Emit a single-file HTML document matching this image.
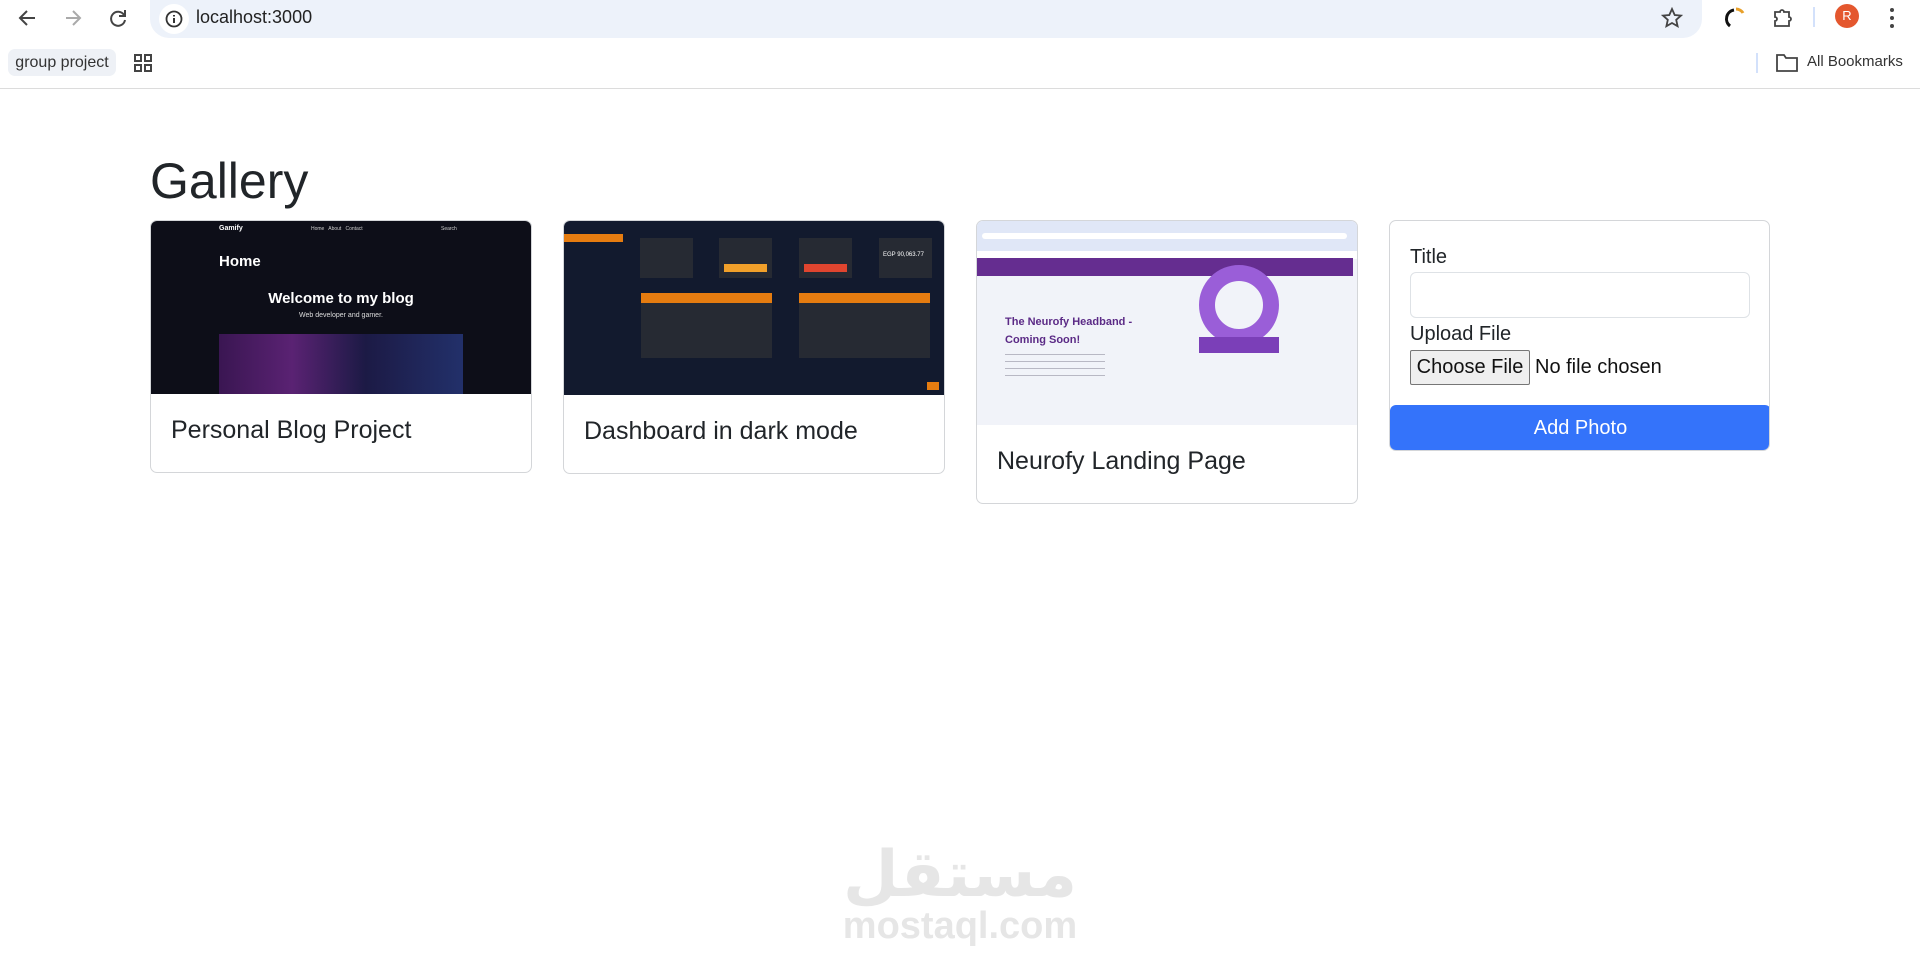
<!DOCTYPE html>
<html><head><meta charset="utf-8"><style>
*{box-sizing:border-box;margin:0;padding:0}
body{width:1920px;height:968px;background:#fff;font-family:"Liberation Sans",sans-serif;position:relative;overflow:hidden;color:#212529}
.a{position:absolute}
.card{position:absolute;border:1px solid #d4d6d9;border-radius:7px;background:#fff;overflow:hidden}
.ct{position:absolute;left:20px;font-size:25px;color:#212529}
</style></head><body>
<!-- chrome -->
<div class="a" style="left:150px;top:0;width:1552px;height:38px;background:#edf2fa;border-radius:0 0 19px 19px"></div>
<div class="a" style="left:159px;top:4px;width:30px;height:30px;background:#fff;border-radius:50%"></div>
<svg class="a" style="left:16px;top:7px" width="120" height="22" viewBox="0 0 120 22">
<path d="M19 11H5M11 4l-7 7 7 7" stroke="#444" stroke-width="2" fill="none"/>
<path d="M50 11h14M57 4l7 7-7 7" stroke="#aaa" stroke-width="2" fill="none"/>
<path d="M108 8a7 7 0 1 0 1 5M109 3v6h-6" stroke="#444" stroke-width="2" fill="none"/>
</svg>
<svg class="a" style="left:165px;top:10px" width="18" height="18"><circle cx="9" cy="9" r="7.5" stroke="#333" stroke-width="1.8" fill="none"/><path d="M9 8v5M9 5v1.5" stroke="#333" stroke-width="2"/></svg>
<div class="a" style="left:196px;top:7px;font-size:18px;color:#222">localhost:3000</div>
<svg class="a" style="left:1661px;top:7px" width="22" height="22"><path d="M11 2l2.7 6 6.3.6-4.8 4.2 1.4 6.4L11 16l-5.6 3.2 1.4-6.4L2 8.6 8.3 8z" stroke="#444" stroke-width="1.8" fill="none"/></svg>
<svg class="a" style="left:1722px;top:5px" width="26" height="26"><path d="M12 5a9 9 0 0 0-4 16" stroke="#111" stroke-width="3" fill="none"/><path d="M14 4c3 0 6 2 7 4" stroke="#e8a02a" stroke-width="3" fill="none"/></svg>
<svg class="a" style="left:1770px;top:6px" width="24" height="24"><path d="M5 6h5a2 2 0 0 1 4 0h5v5a2 2 0 0 1 0 4v5H5v-5a2 2 0 0 0 0-4z" stroke="#444" stroke-width="1.8" fill="none"/></svg>
<div class="a" style="left:1813px;top:7px;width:2px;height:20px;background:#d3e1fb"></div>
<div class="a" style="left:1835px;top:4px;width:24px;height:24px;border-radius:50%;background:#e4572e;color:#fff;font-size:13px;text-align:center;line-height:24px">R</div>
<svg class="a" style="left:1888px;top:6px" width="8" height="24"><circle cx="4" cy="4" r="2" fill="#444"/><circle cx="4" cy="12" r="2" fill="#444"/><circle cx="4" cy="20" r="2" fill="#444"/></svg>
<div class="a" style="left:8px;top:49px;width:108px;height:27px;background:#eef1f6;border-radius:7px;font-size:16px;color:#333;text-align:center;line-height:27px">group project</div>
<svg class="a" style="left:134px;top:54px" width="18" height="18"><g stroke="#444" stroke-width="2" fill="none"><rect x="1" y="1" width="6" height="6"/><rect x="11" y="1" width="6" height="6"/><rect x="1" y="11" width="6" height="6"/><rect x="11" y="11" width="6" height="6"/></g></svg>
<div class="a" style="left:1756px;top:53px;width:2px;height:20px;background:#d3e1fb"></div>
<svg class="a" style="left:1776px;top:53px" width="22" height="19"><path d="M1 2h7l2 3h11v13H1z" stroke="#444" stroke-width="1.8" fill="none"/></svg>
<div class="a" style="left:1807px;top:53px;font-size:15px;color:#333">All Bookmarks</div>
<div class="a" style="left:0;top:88px;width:1920px;height:1px;background:#dcdcdc"></div>

<div class="a" style="left:150px;top:152px;font-size:50px;color:#212529">Gallery</div>

<!-- card 1 -->
<div class="card" style="left:150px;top:220px;width:382px;height:253px">
 <div class="a" style="left:0;top:0;width:380px;height:173px;background:#0d0e18">
  <div class="a" style="left:68px;top:4px;font-size:7px;color:#fff;font-weight:bold">Gamify</div>
  <div class="a" style="left:160px;top:5px;font-size:5px;color:#ccc">Home &nbsp; About &nbsp; Contact</div>
  <div class="a" style="left:290px;top:5px;font-size:5px;color:#ccc">Search</div>
  <div class="a" style="left:68px;top:32px;font-size:15px;color:#fff;font-weight:bold">Home</div>
  <div class="a" style="left:0;top:69px;width:380px;text-align:center;font-size:15px;color:#fff;font-weight:bold">Welcome to my blog</div>
  <div class="a" style="left:0;top:91px;width:380px;text-align:center;font-size:7px;color:#ddd">Web developer and gamer.</div>
  <div class="a" style="left:68px;top:113px;width:244px;height:60px;background:linear-gradient(90deg,#3a1652,#5a2273 30%,#1c1a45 60%,#22306a)"></div>
 </div>
 <div class="ct" style="top:195px">Personal Blog Project</div>
</div>
<!-- card 2 -->
<div class="card" style="left:563px;top:220px;width:382px;height:254px">
 <div class="a" style="left:0;top:0;width:380px;height:174px;background:#121a2e">
  <div class="a" style="left:0;top:13px;width:59px;height:8px;background:#e57c10"></div>
  <div class="a" style="left:76px;top:17px;width:53px;height:40px;background:#262a33"></div>
  <div class="a" style="left:155px;top:17px;width:53px;height:40px;background:#262a33"><div class="a" style="left:5px;top:26px;width:43px;height:8px;background:#f1a02a"></div></div>
  <div class="a" style="left:235px;top:17px;width:53px;height:40px;background:#262a33"><div class="a" style="left:5px;top:26px;width:43px;height:8px;background:#e0452f"></div></div>
  <div class="a" style="left:315px;top:17px;width:53px;height:40px;background:#262a33"><div class="a" style="left:4px;top:14px;font-size:6px;color:#fff">EGP 90,063.77</div></div>
  <div class="a" style="left:77px;top:72px;width:131px;height:65px;background:#262a33"><div style="height:10px;background:#e57c10"></div></div>
  <div class="a" style="left:235px;top:72px;width:131px;height:65px;background:#262a33"><div style="height:10px;background:#e57c10"></div></div>
  <div class="a" style="left:363px;top:161px;width:12px;height:8px;background:#e57c10"></div>
 </div>
 <div class="ct" style="top:196px">Dashboard in dark mode</div>
</div>
<!-- card 3 -->
<div class="card" style="left:976px;top:220px;width:382px;height:284px">
 <div class="a" style="left:0;top:0;width:380px;height:204px;background:#f1f3f9">
  <div class="a" style="left:0;top:0;width:380px;height:30px;background:#e0e7f7"></div>
  <div class="a" style="left:5px;top:12px;width:365px;height:6px;background:#fff;border-radius:3px"></div>
  <div class="a" style="left:0;top:30px;width:380px;height:8px;background:#fff"></div>
  <div class="a" style="left:0;top:37px;width:376px;height:18px;background:#652d90"></div>
  <div class="a" style="left:28px;top:92px;font-size:11px;color:#5b2a86;font-weight:bold;line-height:18px">The Neurofy Headband -<br>Coming Soon!</div>
  <div class="a" style="left:28px;top:130px;width:100px;height:30px;background:repeating-linear-gradient(#f1f3f9 0 3px,#b8b8c4 3px 4px,#f1f3f9 4px 7px)"></div>
  <div class="a" style="left:222px;top:44px;width:80px;height:80px;border:16px solid #9a5ed8;border-radius:50%"></div>
  <div class="a" style="left:222px;top:116px;width:80px;height:16px;background:#7b3fb8"></div>
 </div>
 <div class="ct" style="top:226px">Neurofy Landing Page</div>
</div>
<!-- form -->
<div class="card" style="left:1389px;top:220px;width:381px;height:231px">
 <div class="a" style="left:20px;top:25px;font-size:20px">Title</div>
 <div class="a" style="left:20px;top:51px;width:340px;height:46px;border:1px solid #dee2e6;border-radius:6px"></div>
 <div class="a" style="left:20px;top:102px;font-size:20px">Upload File</div>
 <div class="a" style="left:20px;top:129px;width:120px;height:35px;border:1px solid #767676;border-radius:2px;background:#efefef;font-size:20px;text-align:center;line-height:33px;color:#111">Choose File</div>
 <div class="a" style="left:145px;top:135px;font-size:20px;color:#111">No file chosen</div>
 <div class="a" style="left:0;top:184px;width:381px;height:47px;background:#3473fa;border-radius:6px;color:#fff;font-size:20px;text-align:center;line-height:47px">Add Photo</div>
</div>

<div class="a" style="left:760px;top:834px;width:400px;text-align:center;font-family:'Noto Sans CJK SC','DejaVu Sans',sans-serif;font-size:64px;font-weight:bold;color:#e6e6e6;line-height:70px">مستقل</div>
<div class="a" style="left:760px;top:905px;width:400px;text-align:center;font-size:38px;font-weight:bold;color:#e6e6e6">mostaql.com</div>
</body></html>
